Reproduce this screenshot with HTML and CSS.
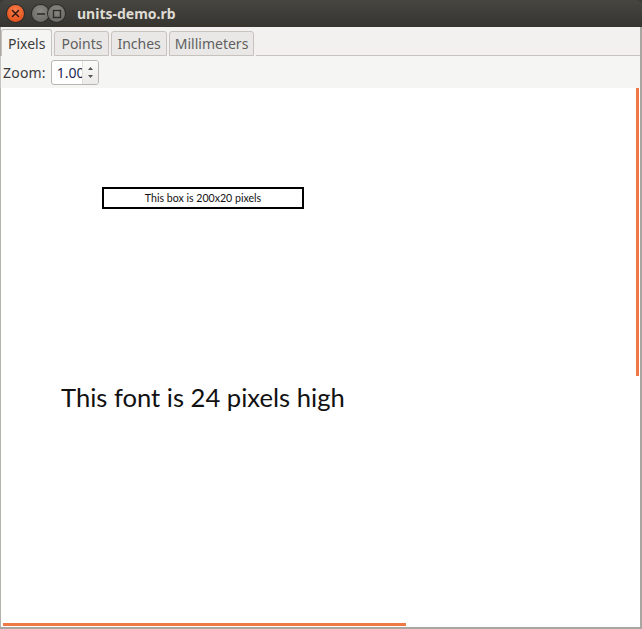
FILE: index.html
```html
<!DOCTYPE html>
<html>
<head>
<meta charset="utf-8">
<link rel="stylesheet" href="styles.css">
</head>
<body>
<div class="window">
  <div class="titlebar">
    <div class="controls">
      <span class="btn close"><svg width="9" height="9" viewBox="0 0 9 9"><path d="M1.5 1.5 L7.5 7.5 M7.5 1.5 L1.5 7.5" stroke="#3a1a10" stroke-width="1.6" stroke-linecap="round"/></svg></span>
      <span class="btn minimize"><svg width="10" height="10" viewBox="0 0 10 10"><path d="M1 5 H9" stroke="#2e2d2a" stroke-width="1.6"/></svg></span>
      <span class="btn maximize"><svg width="10" height="10" viewBox="0 0 10 10"><rect x="1.5" y="1.5" width="7" height="7" fill="none" stroke="#2e2d2a" stroke-width="1.4"/></svg></span>
    </div>
    <div class="title">units-demo.rb</div>
  </div>
  <div class="body">
    <div class="tabs">
      <div class="tab active">Pixels</div>
      <div class="tab wide">Points</div>
      <div class="tab">Inches</div>
      <div class="tab">Millimeters</div>
      <div class="tab-fill"></div>
    </div>
    <div class="page">
      <div class="toolbar">
        <span class="label">Zoom:</span>
        <div class="spin">
          <span class="spin-value">1.00</span>
          <span class="spin-arrows">
            <svg width="7" height="16" viewBox="0 0 7 16"><path d="M1 6 L3.5 3 L6 6 Z" fill="#555"/><path d="M1 11 L3.5 14 L6 11 Z" fill="#555"/></svg>
          </span>
        </div>
      </div>
      <div class="canvas">
        <div class="box">This box is 200x20 pixels</div>
        <div class="big">This font is 24 pixels high</div>
        <div class="vscroll"></div>
        <div class="hscroll"></div>
      </div>
    </div>
  </div>
</div>
</body>
</html>
```
FILE: styles.css
```css
html, body {
  margin: 0;
  padding: 0;
  width: 642px;
  height: 629px;
  overflow: hidden;
  background: #3c3b37;
}
.window {
  width: 642px;
  height: 629px;
  display: flex;
  flex-direction: column;
  font-family: "Noto Sans", "DejaVu Sans", sans-serif;
}
.titlebar {
  height: 27px;
  flex: none;
  display: flex;
  align-items: center;
  background: linear-gradient(#474641, #3c3b37 60%, #35342f);
  border-radius: 6px 6px 0 0;
}
.controls {
  display: flex;
  align-items: center;
  margin-left: 7px;
}
.btn {
  width: 17px;
  height: 17px;
  border-radius: 50%;
  display: flex;
  align-items: center;
  justify-content: center;
}
.close {
  background: radial-gradient(circle at 50% 35%, #f7804f, #e7561f 70%, #c84815);
  box-shadow: 0 0 0 1px #2c2b28;
}
.minimize, .maximize {
  background: radial-gradient(circle at 50% 35%, #8a8983, #6f6e69 70%, #5e5d58);
  box-shadow: 0 0 0 1px #2c2b28;
}
.minimize { margin-left: 8px; }
.maximize { margin-left: -1px; }
.title {
  margin-left: 12px;
  color: #dfdbd2;
  font-weight: bold;
  font-size: 14px;
}
.body {
  flex: 1;
  display: flex;
  flex-direction: column;
  background: #f2f1f0;
  border-left: 1px solid #a9a6a1;
  border-right: 2px solid #a9a6a1;
  border-bottom: 2px solid #a9a6a1;
}
.tabs {
  height: 29px;
  flex: none;
  display: flex;
  align-items: flex-end;
  font-size: 14px;
}
.tab {
  height: 25px;
  line-height: 23px;
  padding: 0 5px;
  margin-right: 2px;
  background: #e9e8e6;
  border: 1px solid #c6c3be;
  border-radius: 3px 3px 0 0;
  color: #5f5f5f;
  box-sizing: border-box;
}
.tab.wide {
  padding: 0 6px;
}
.tab.active {
  height: 27px;
  line-height: 27px;
  padding: 0 6px;
  background: #f5f5f4;
  color: #3c3c3c;
  border-bottom: none;
}
.tab-fill {
  flex: 1;
  height: 1px;
  background: #c6c3be;
}
.page {
  flex: 1;
  display: flex;
  flex-direction: column;
  background: #f5f5f4;
}
.toolbar {
  height: 32px;
  flex: none;
  display: flex;
  align-items: center;
  padding-left: 2px;
  font-size: 14px;
  color: #3c3c3c;
  border-left: 1px solid #c6c3be;
  margin-left: -1px;
}
.label {
  margin-right: 5px;
  letter-spacing: 0.2px;
}
.spin {
  width: 48px;
  height: 25px;
  box-sizing: border-box;
  border: 1px solid #b9b6b1;
  border-radius: 3px;
  background: #fff;
  display: flex;
  align-items: center;
  overflow: hidden;
}
.spin-value {
  width: 30px;
  flex: none;
  overflow: hidden;
  white-space: nowrap;
  padding-left: 5px;
  box-sizing: border-box;
  color: #1d2a50;
}
.spin-arrows {
  flex: 1;
  height: 100%;
  display: flex;
  align-items: center;
  justify-content: center;
  background: linear-gradient(#fbfbfa, #ebeae8);
  border-left: 1px solid #e2e0dc;
}
.canvas {
  flex: 1;
  position: relative;
  background: #fff;
  border-left: 1px solid #b5b2ad;
  margin-left: -1px;
  overflow: hidden;
}
.box {
  margin-top: 99px;
  margin-left: 101px;
  width: 202px;
  height: 22px;
  box-sizing: border-box;
  border: 2px solid #000;
  font-family: "Lato", "Noto Sans", sans-serif;
  font-size: 10.6px;
  line-height: 18px;
  text-align: center;
  color: #111;
}
.big {
  margin-top: 172px;
  margin-left: 60px;
  font-family: "Lato", "Noto Sans", sans-serif;
  font-size: 25.6px;
  line-height: 32px;
  color: #111;
}
.vscroll {
  position: absolute;
  right: 1px;
  top: 0;
  width: 3px;
  height: 288px;
  background: #f07746;
}
.hscroll {
  position: absolute;
  left: 2px;
  bottom: 1px;
  width: 403px;
  height: 3px;
  background: #f07746;
}
```
